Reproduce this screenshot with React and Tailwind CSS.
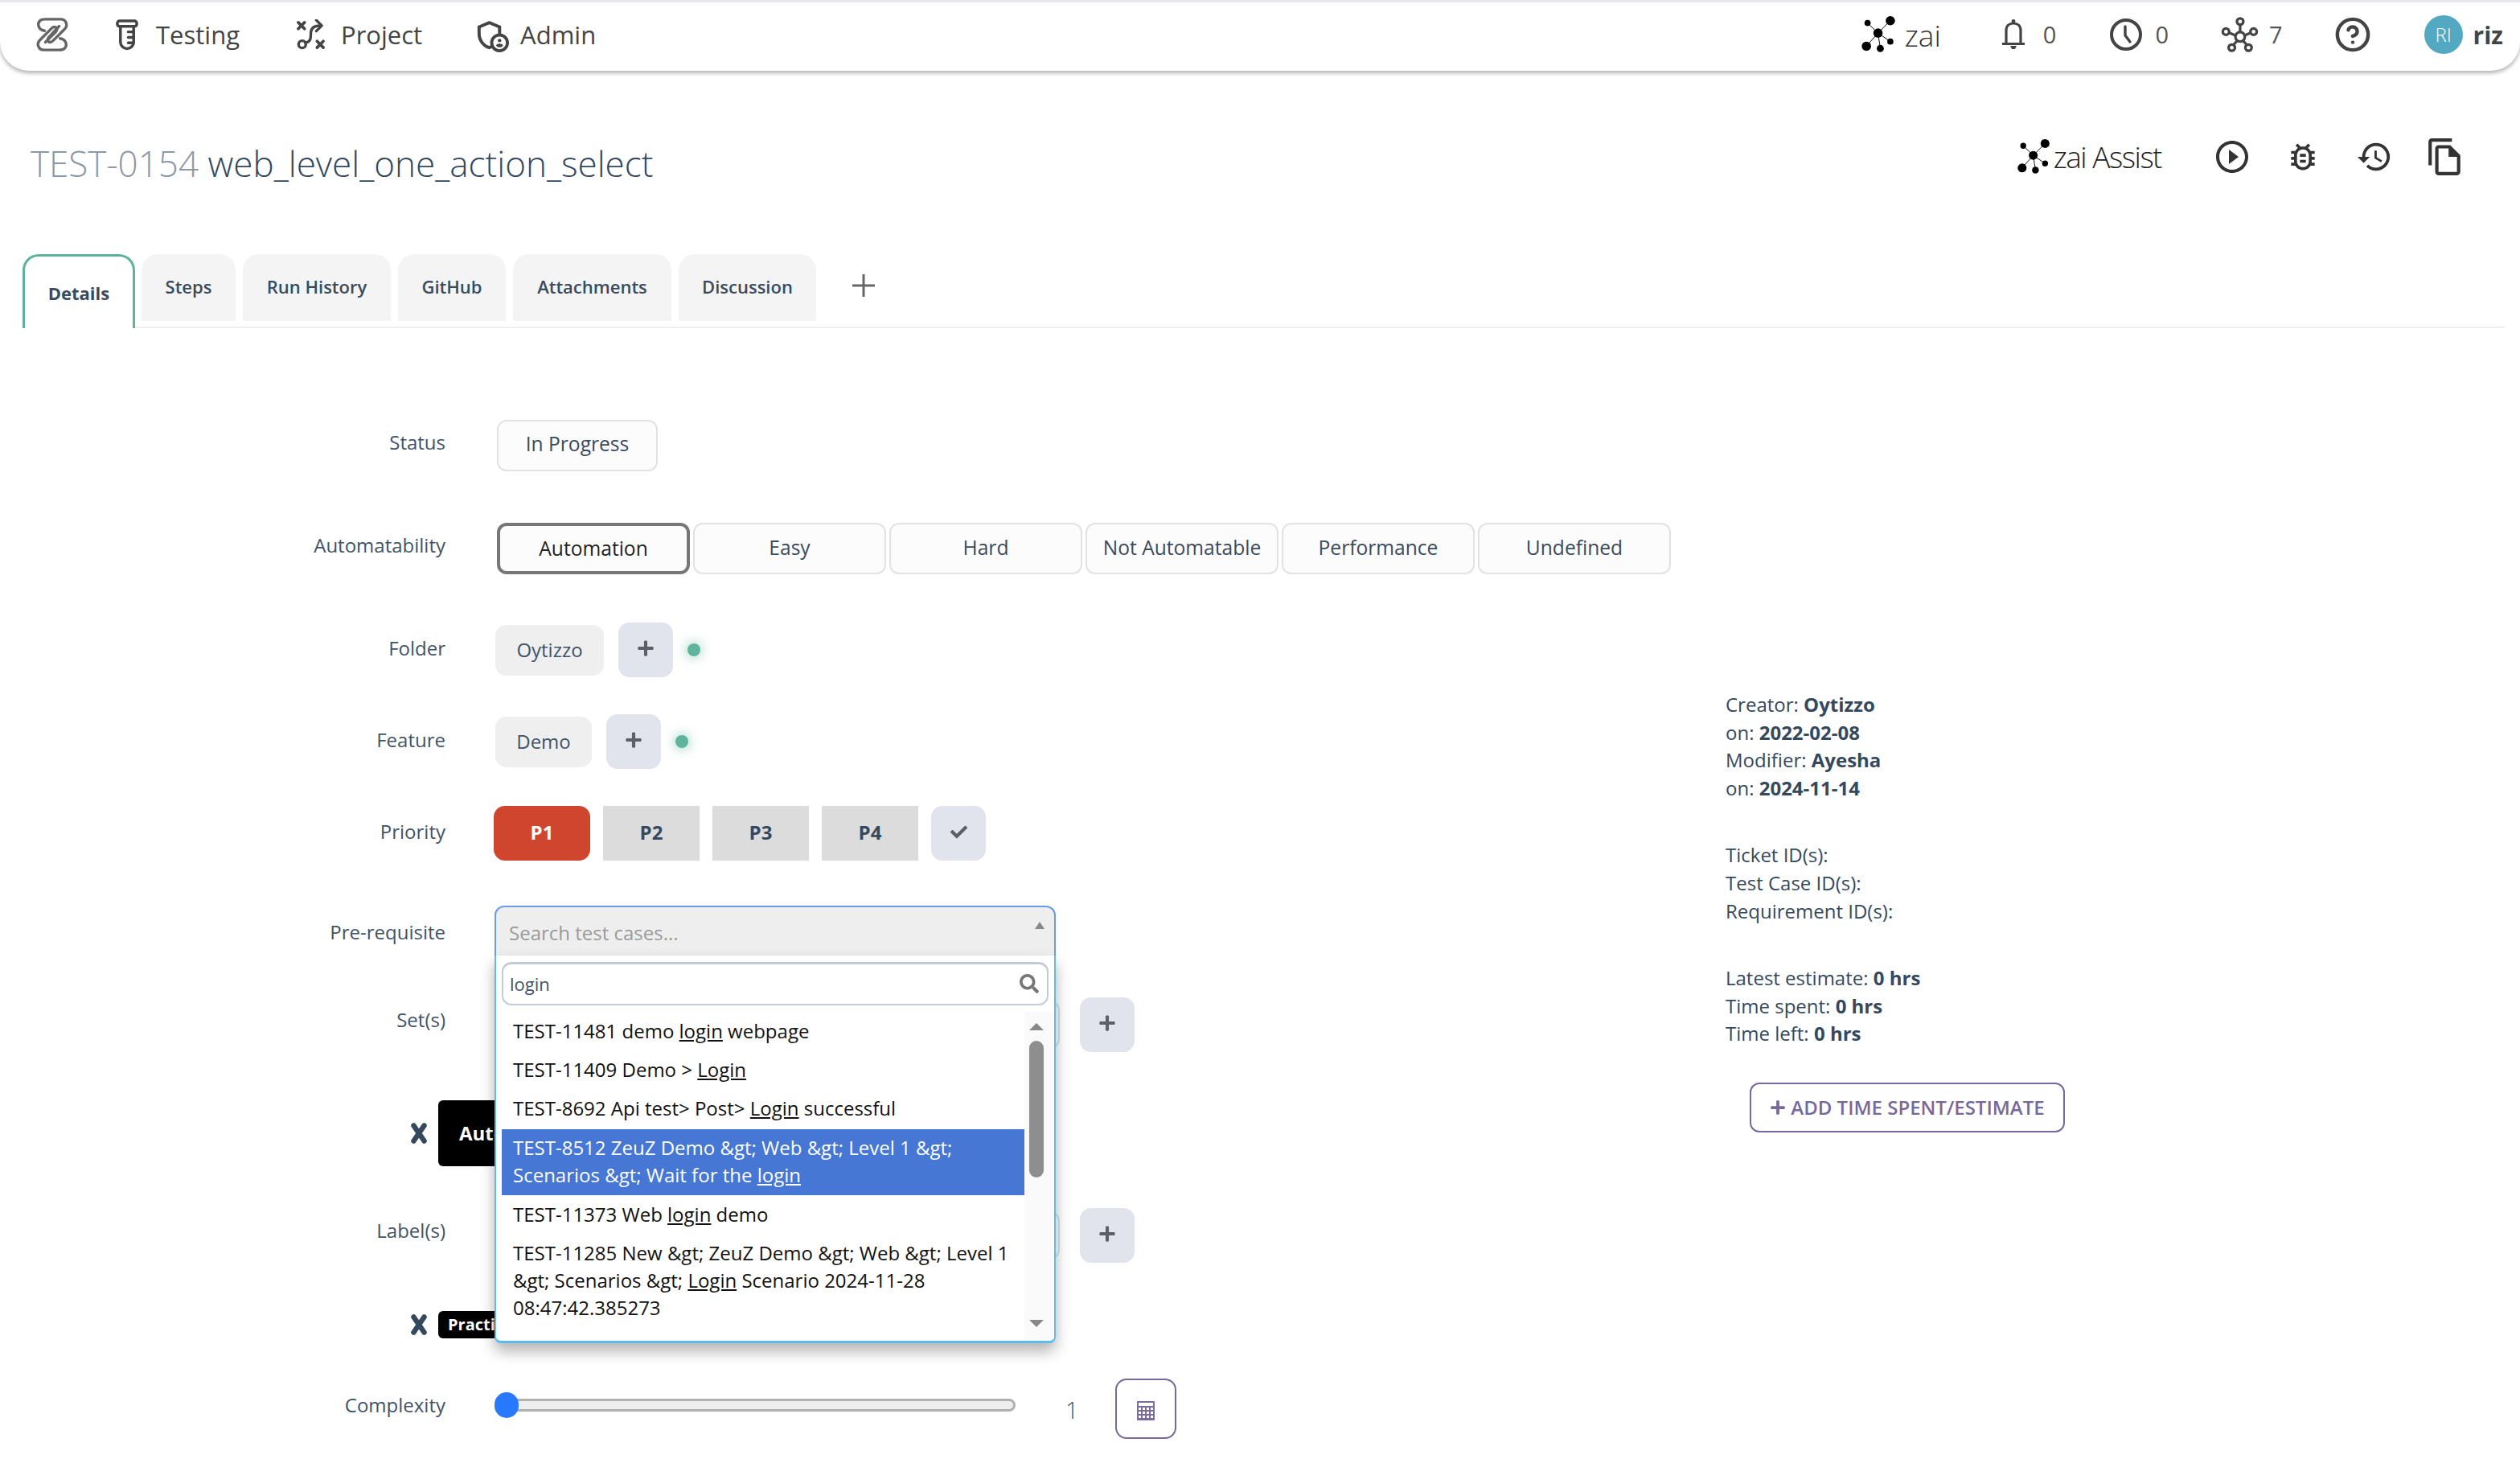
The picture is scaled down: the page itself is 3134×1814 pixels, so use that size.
import React from "react";
import { MdOutlineAdminPanelSettings, MdOutlineBugReport, MdPlayCircleOutline, MdHistory, MdOutlineFileCopy } from "react-icons/md";
import { FaPlus, FaCheck, FaSearch } from "react-icons/fa";
import { CircleHelp } from "lucide-react";

const Logo = () => (
  <svg viewBox="12 8 46 48" className="w-[44px] h-[46px] ml-[43px]" fill="none" stroke="#666" strokeWidth="3.6" strokeLinecap="round">
    <path d="M25 27C17 26 15 18 19 14C21 12 23 12 26 12H46C53 12 56 20 51 25L36 40C32 44 27 41 30 36L44 21" />
    <path d="M45 37C53 38 55 46 51 50C49 52 47 52 44 52H24C17 52 14 44 19 39L34 24C38 20 43 23 40 28L26 42" />
  </svg>
);
const Tube = () => (
  <svg viewBox="112 7 31 42" className="w-[30px] h-[41px] ml-[56px]" fill="none" stroke="#444" strokeWidth="3.6" strokeLinecap="round">
    <rect x="115" y="10" width="25" height="7" rx="3" />
    <path d="M119 18V37a8.5 8.5 0 0 0 17 0V18" />
    <path d="M129 24h7M129 31h7M129 38h7" />
  </svg>
);
const Strategy = () => (
  <svg viewBox="17 9 39 40" className="w-[38px] h-[39px] ml-[70px]" fill="none" stroke="#444" strokeWidth="3.4" strokeLinecap="round" strokeLinejoin="round">
    <path d="M20 13l8 8M28 13l-8 8M44 37l8 8M52 37l-8 8" strokeWidth="3.8" />
    <circle cx="25" cy="41" r="4.6" />
    <path d="M29 39C36 38 36 33 36 27C36 20 40 17 48 17" />
    <path d="M43 10L50 17L43 24" />
  </svg>
);
const Zai = ({ className }) => (
  <svg viewBox="12 7 45 50" className={className} fill="#000" stroke="#000">
    <path d="M33 30L19.5 17M33 30L49 14M33 30L49 41M33 30L36 50M33 30L18 47" strokeWidth="1" fill="none" />
    <g stroke="none">
      <circle cx="33" cy="30" r="6" />
      <circle cx="19.5" cy="17" r="4" />
      <circle cx="49" cy="14" r="6" />
      <circle cx="49" cy="41" r="4" />
      <circle cx="36" cy="50" r="4.6" />
      <circle cx="18" cy="47" r="6" />
    </g>
  </svg>
);
const Bell = () => (
  <svg viewBox="0 0 32 40" className="w-[32px] h-[40px] ml-[74px]" fill="none" stroke="#444" strokeWidth="3.2">
    <path d="M2 31.5H30M7 31V15C7 9 11 6 16 6C21 6 25 9 25 15V31" />
    <circle cx="16" cy="3.5" r="2.4" fill="#444" stroke="none" />
    <path d="M12 34h8l-2 4h-4z" fill="#444" stroke="none" />
  </svg>
);
const Clock = () => (
  <svg viewBox="0 0 40 40" className="w-[40px] h-[40px]" fill="none" stroke="#444" strokeWidth="4" strokeLinecap="round">
    <circle cx="20" cy="20" r="18" />
    <path d="M19 10V21L25 29" strokeWidth="3.4" />
  </svg>
);
const Net = () => (
  <svg viewBox="8 3 52 50" className="w-[47px] h-[46px]" fill="none" stroke="#444" strokeWidth="3.6">
    <circle cx="34.5" cy="31" r="6.5" />
    <circle cx="34.5" cy="10" r="4.4" />
    <circle cx="15" cy="24" r="4.4" />
    <circle cx="53" cy="24" r="4.4" />
    <circle cx="23" cy="46" r="4.4" />
    <circle cx="46" cy="46" r="4.4" />
    <path d="M34.5 15V24.5M19.5 25.5L28 29M49 25.5L41 29M25.5 42L30.5 36.5M43.5 42L38.5 36.5" />
  </svg>
);
const Calc = () => (
  <svg viewBox="0 0 22 24" className="w-[22px] h-[26px]" fill="#7a6c9f">
    <path fillRule="evenodd" d="M1 0h20a1 1 0 0 1 1 1v22a1 1 0 0 1-1 1H1a1 1 0 0 1-1-1V1a1 1 0 0 1 1-1zM2 2v4h18V2z" />
    <path fill="#fff" d="M2 8h3v3H2zM7 8h3v3H7zM12 8h3v3h-3zM17 8h3v3h-3zM2 13h3v3H2zM7 13h3v3H7zM12 13h3v3h-3zM17 13h3v3h-3zM2 18h3v3H2zM7 18h3v3H7zM12 18h3v3h-3zM17 18h3v3h-3z" />
  </svg>
);
const Cross = () => (
  <svg viewBox="0 0 22 28" className="w-[22px] h-[28px] mr-[13px] shrink-0" stroke="#34495e" strokeWidth="6.5" strokeLinecap="round">
    <path d="M4.5 4.5L17.5 23.5M17.5 4.5L4.5 23.5" />
  </svg>
);

const Label = ({ children, className = "" }) => (
  <div className={`w-[554px] shrink-0 text-right text-[24px] leading-[34px] text-[#3f5369] ${className}`}>{children}</div>
);

const AddBtn = ({ className = "" }) => (
  <button className={`w-[68px] h-[68px] pb-[5px] rounded-[14px] bg-[#e1e4ec] flex items-center justify-center text-[#5c5f66] text-[22px] ${className}`}>
    <FaPlus />
  </button>
);

const Dot = () => <span className="ml-[18px] w-[16px] h-[16px] rounded-full bg-[#5fb49c] shadow-[0_0_12px_4px_rgba(95,180,156,0.35)]" />;

const Tab = ({ children, w }) => (
  <div className={`h-[83px] ${w} rounded-t-[20px] bg-[#f4f4f4] flex items-center justify-center pb-[3px] text-[22px] font-semibold text-[#3a4b5e]`}>{children}</div>
);

const AutoBtn = ({ children }) => (
  <button className="w-[240px] h-[64px] pb-[2px] rounded-[12px] border-2 border-[#e2e2e2] bg-[#fcfcfc] text-[24.6px] font-medium text-[#3a4b5e]">{children}</button>
);

const Opt = ({ children, active }) => (
  <div className={`px-[14px] leading-[34px] text-[24px] ${active ? "mt-[2px] pt-[6px] pb-[8px] bg-[#4677d4] text-white" : "py-[7px] text-[#111]"}`}>{children}</div>
);

const Chip = ({ h, text, size, pl }) => (
  <div className="flex items-center ml-[510px]">
    <Cross />
    <div className={`${h} w-[70px] overflow-hidden whitespace-nowrap rounded-l-[6px] bg-black text-white font-bold ${size} ${pl} flex items-center`}>{text}</div>
  </div>
);

export default function App() {
  return (
    <div className="w-[3134px] h-[1814px] overflow-hidden bg-white font-['Open_Sans',sans-serif] text-[#34495e]">
      <header className="h-[88px] border-t-[3px] border-[#e6e6ef] bg-white rounded-b-[36px] shadow-[0_3px_5px_rgba(0,0,0,0.3)] flex items-center text-[#444] text-[31px] pb-[5px]">
        <Logo />
        <Tube />
        <span className="ml-[21px] leading-none">Testing</span>
        <Strategy />
        <span className="ml-[18px] leading-none">Project</span>
        <MdOutlineAdminPanelSettings className="ml-[63px] text-[47px]" />
        <span className="ml-[12px] leading-none">Admin</span>
        <div className="ml-auto flex items-center">
          <Zai className="w-[44px] h-[48px]" />
          <span className="ml-[10px] text-[37px] font-light text-[#333] leading-none">zai</span>
          <Bell />
          <span className="ml-[21px] text-[29px] text-[#555]">0</span>
          <span className="ml-[67px]"><Clock /></span>
          <span className="ml-[16px] text-[29px] text-[#555]">0</span>
          <span className="ml-[65px]"><Net /></span>
          <span className="ml-[13px] text-[29px] text-[#555]">7</span>
          <CircleHelp className="ml-[64px] w-[46px] h-[46px]" strokeWidth={2.3} color="#444" />
          <span className="ml-[66px] w-[48px] h-[48px] rounded-full bg-[#53a8c2] text-white text-[24px] font-light flex items-center justify-center">RI</span>
          <span className="ml-[13px] mr-[21px] font-bold text-[30px]">riz</span>
        </div>
      </header>

      <div className="h-[231px] flex flex-col">
        <div className="flex items-center h-[96px] mt-[67px]">
          <div className="ml-[38px] text-[44px] font-light leading-none">
            <span className="text-[#8c98a6]">TEST-0154</span> web_level_one_action_select
          </div>
          <div className="ml-auto flex items-center text-[#333] pb-[16px]">
            <Zai className="w-[44px] h-[46px]" />
            <span className="ml-[2px] text-[37px] font-light tracking-[-1.5px] text-[#222]">zai Assist</span>
            <MdPlayCircleOutline className="ml-[64px] text-[48px]" />
            <MdOutlineBugReport className="ml-[42px] text-[44px]" />
            <MdHistory className="ml-[44px] text-[46px]" />
            <MdOutlineFileCopy className="ml-[40px] mr-[68px] text-[50px]" />
          </div>
        </div>
      </div>

      <div className="mt-[-3px] mx-[28px] mr-[19px] flex h-[92px] border-b-2 border-[#eeeeee] items-start">
        <div className="w-[140px] h-[92px] rounded-t-[20px] border-[3px] border-b-0 border-[#5db39a] bg-white flex items-center justify-center text-[22px] font-bold text-[#3a4b5e] pt-[2px] relative z-10">Details</div>
        <div className="ml-[8px] flex gap-[9px]">
          <Tab w="w-[117px]">Steps</Tab>
          <Tab w="w-[184px]">Run History</Tab>
          <Tab w="w-[134px]">GitHub</Tab>
          <Tab w="w-[197px]">Attachments</Tab>
          <Tab w="w-[171px]">Discussion</Tab>
        </div>
        <FaPlusThin />
      </div>

      <div className="flex">
        <div className="w-[2146px] shrink-0 pt-[114px]">
          <div className="flex items-center h-[64px]">
            <Label className="pb-[8px]">Status</Label>
            <button className="ml-[64px] w-[200px] h-[64px] pb-[4px] rounded-[12px] border-2 border-[#e2e2e2] bg-[#fcfcfc] text-[24.6px] font-medium text-[#3a4b5e]">In Progress</button>
          </div>
          <div className="flex items-center h-[64px] mt-[64px]">
            <Label className="pb-[8px]">Automatability</Label>
            <div className="ml-[64px] flex gap-[4px]">
              <button className="w-[240px] h-[64px] rounded-[12px] border-[4px] border-[#777] bg-[#fcfcfc] text-[24.6px] font-medium text-[#222]">Automation</button>
              <AutoBtn>Easy</AutoBtn>
              <AutoBtn>Hard</AutoBtn>
              <AutoBtn>Not Automatable</AutoBtn>
              <AutoBtn>Performance</AutoBtn>
              <AutoBtn>Undefined</AutoBtn>
            </div>
          </div>
          <div className="flex items-center h-[68px] mt-[60px]">
            <Label className="pb-[4px]">Folder</Label>
            <div className="ml-[62px] w-[135px] h-[63px] rounded-[14px] bg-[#efefef] flex items-center justify-center text-[24px] text-[#3f5369]">Oytizzo</div>
            <AddBtn className="ml-[18px]" />
            <Dot />
          </div>
          <div className="flex items-center h-[68px] mt-[46px]">
            <Label className="pb-[4px]">Feature</Label>
            <div className="ml-[62px] w-[120px] h-[63px] rounded-[14px] bg-[#efefef] flex items-center justify-center text-[24px] text-[#3f5369]">Demo</div>
            <AddBtn className="ml-[18px]" />
            <Dot />
          </div>
          <div className="flex items-center h-[68px] mt-[46px]">
            <Label className="pb-[4px]">Priority</Label>
            <div className="ml-[60px] flex gap-[16px] text-[24px] font-bold">
              <div className="w-[120px] h-[68px] pb-[3px] rounded-[14px] bg-[#d0452d] text-white flex items-center justify-center">P1</div>
              <div className="w-[120px] h-[68px] pb-[3px] bg-[#dcdcdc] flex items-center justify-center">P2</div>
              <div className="w-[120px] h-[68px] pb-[3px] bg-[#dcdcdc] flex items-center justify-center">P3</div>
              <div className="w-[120px] h-[68px] pb-[3px] bg-[#dcdcdc] flex items-center justify-center">P4</div>
              <div className="w-[68px] h-[68px] pb-[3px] rounded-[14px] bg-[#e1e4ec] text-[#5c5f66] flex items-center justify-center text-[21px]"><FaCheck /></div>
            </div>
          </div>

          <div className="flex items-center h-[62px] mt-[56px]">
            <Label className="pt-[4px]">Pre-requisite</Label>
            <div className="ml-[61px] relative w-[698px] h-[62px] z-20">
              <div className="h-[62px] rounded-t-[12px] border-2 border-b-0 border-[#6d9ae8] bg-[#eeeeee] flex items-center pl-[16px] text-[24px] text-[#9a9a9a] pt-[4px]">
                Search test cases...
                <span className="absolute right-[14px] top-[20px] w-0 h-0 border-x-[6px] border-x-transparent border-b-[9px] border-b-[#888]" />
              </div>
              <div className="absolute left-0 top-[62px] w-[698px] h-[482px] bg-white border-2 border-t-0 border-b-[3px] border-[#5ebbed] rounded-b-[8px] shadow-[0_10px_18px_rgba(0,0,0,0.3)] overflow-hidden">
                <div className="mx-[7px] mt-[8px] h-[54px] rounded-[12px] border-2 border-t-[3px] border-[#c3cbd9] flex items-center pl-[8px] pb-[1px] text-[22px] text-[#3f5369] relative">
                  login
                  <FaSearch className="absolute right-[10px] top-[12px] text-[#777] text-[24px]" />
                </div>
                <div className="flex mt-[8px] h-[410px] overflow-hidden">
                  <div className="w-[650px] ml-[7px] shrink-0">
                    <Opt>TEST-11481 demo <u>login</u> webpage</Opt>
                    <Opt>TEST-11409 Demo &gt; <u>Login</u></Opt>
                    <Opt>TEST-8692 Api test&gt; Post&gt; <u>Login</u> successful</Opt>
                    <Opt active>{"TEST-8512 ZeuZ Demo &gt; Web &gt; Level 1 &gt; Scenarios &gt; Wait for the "}<u>login</u></Opt>
                    <Opt>TEST-11373 Web <u>login</u> demo</Opt>
                    <Opt>{"TEST-11285 New &gt; ZeuZ Demo &gt; Web &gt; Level 1 &gt; Scenarios &gt; "}<u>Login</u> Scenario 2024-11-28 08:47:42.385273</Opt>
                  </div>
                  <div className="relative w-[37px] bg-[#fafafa]">
                    <span className="absolute left-[6px] top-[14px] w-0 h-0 border-x-[9px] border-x-transparent border-b-[9px] border-b-[#888]" />
                    <span className="absolute left-[6px] top-[36px] w-[18px] h-[170px] rounded-full bg-[#8e8e8e]" />
                    <span className="absolute left-[6px] top-[383px] w-0 h-0 border-x-[9px] border-x-transparent border-t-[9px] border-t-[#888]" />
                  </div>
                </div>
              </div>
            </div>
          </div>

          <div className="flex items-center h-[68px] mt-[52px]">
            <Label className="pb-[12px]">Set(s)</Label>
            <div className="ml-[64px] w-[700px] h-[60px] rounded-[12px] border-2 border-[#d5e2ef] bg-white" />
            <AddBtn className="ml-[25px]" />
          </div>
          <div className="h-[82px] mt-[60px]">
            <Chip h="h-[82px]" text="Automation" size="text-[24px]" pl="pl-[26px]" />
          </div>
          <div className="flex items-center h-[68px] mt-[52px]">
            <Label className="pb-[12px]">Label(s)</Label>
            <div className="ml-[64px] w-[700px] h-[60px] rounded-[12px] border-2 border-[#d5e2ef] bg-white" />
            <AddBtn className="ml-[25px]" />
          </div>
          <div className="h-[34px] mt-[60px]">
            <Chip h="h-[34px]" text="Practice" size="text-[20px]" pl="pl-[12px]" />
          </div>
          <div className="flex items-center h-[75px] mt-[50px]">
            <Label className="pb-[10px]">Complexity</Label>
            <div className="ml-[61px] mb-[10px] relative w-[648px] h-[32px] flex items-center">
              <div className="ml-[3px] w-[645px] h-[16px] rounded-full bg-[#eeeeee] border-[3px] border-[#b0b0b0]" />
              <span className="absolute left-0 top-0 w-[30px] h-[32px] rounded-full bg-[#2979ff]" />
            </div>
            <span className="ml-[62px] text-[29px] font-light text-[#555] pt-[2px]">1</span>
            <button className="ml-[45px] w-[76px] h-[75px] pt-[4px] rounded-[14px] border-2 border-[#76699b] flex items-center justify-center"><Calc /></button>
          </div>
        </div>

        <div className="pt-[451px] text-[24px] leading-[34.6px] text-[#34495e]">
          <div>Creator: <b>Oytizzo</b></div>
          <div>on: <b>2022-02-08</b></div>
          <div>Modifier: <b>Ayesha</b></div>
          <div>on: <b>2024-11-14</b></div>
          <div className="mt-[49px]">Ticket ID(s):</div>
          <div>Test Case ID(s):</div>
          <div>Requirement ID(s):</div>
          <div className="mt-[49px]">Latest estimate: <b>0 hrs</b></div>
          <div>Time spent: <b>0 hrs</b></div>
          <div>Time left: <b>0 hrs</b></div>
          <button className="mt-[43px] ml-[30px] w-[392px] h-[62px] rounded-[12px] border-2 border-[#76699b] flex items-center justify-center gap-[6px] text-[#76699b] font-semibold text-[24px]">
            <FaPlus className="text-[20px]" />ADD TIME SPENT/ESTIMATE
          </button>
        </div>
      </div>
    </div>
  );
}

function FaPlusThin() {
  return (
    <svg viewBox="0 0 30 30" className="w-[30px] h-[30px] ml-[44px] mt-[24px]" stroke="#666" strokeWidth="3">
      <path d="M15 1V29M1 15H29" />
    </svg>
  );
}
